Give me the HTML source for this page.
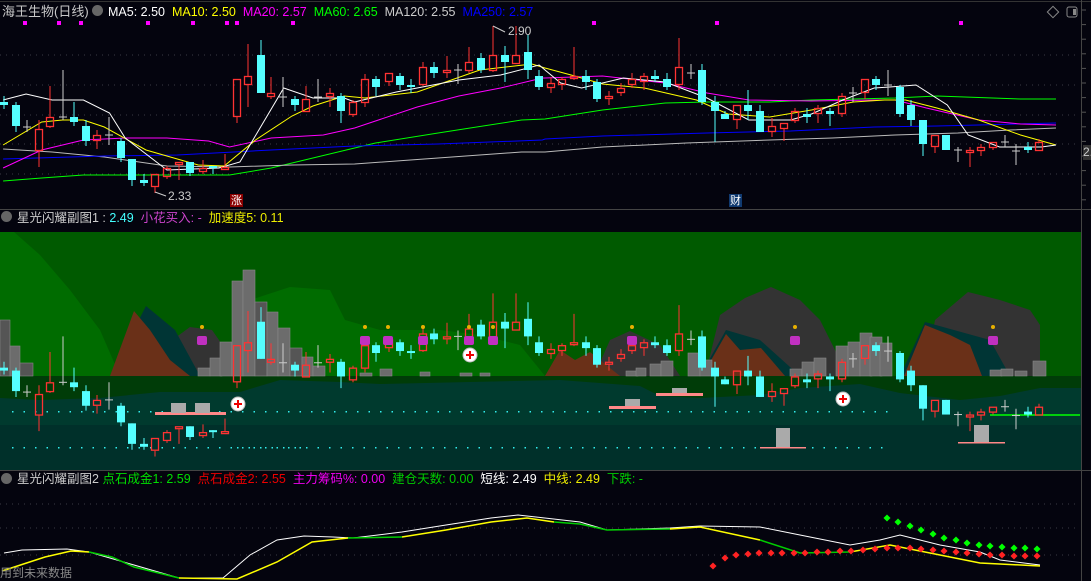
<!DOCTYPE html>
<html><head><meta charset="utf-8"><style>
html,body{margin:0;padding:0;background:#04040e;width:1091px;height:581px;overflow:hidden}
#c{position:absolute;left:0;top:0}
.t{position:absolute;font-family:"Liberation Sans","Noto Sans CJK SC",sans-serif;font-size:12px;white-space:nowrap;line-height:14px}
</style></head><body>
<svg id="c" width="1091" height="581" xmlns="http://www.w3.org/2000/svg">
<rect width="1091" height="581" fill="#04040e"/>
<g id="g"></g>
</svg>
<div class="t" style="left:2px;top:5px;color:#c8c8c8;font-size:13px">海王生物(日线)</div>
<div class="t" style="left:92px;top:5px;width:11px;height:11px;border-radius:6px;background:#666"></div>
<div class="t" style="left:108px;top:5px;font-size:12.5px"><span style="color:#fff">MA5: 2.50</span>&nbsp; <span style="color:#ff0">MA10: 2.50</span>&nbsp; <span style="color:#f0f">MA20: 2.57</span>&nbsp; <span style="color:#0f0">MA60: 2.65</span>&nbsp; <span style="color:#ccc">MA120: 2.55</span>&nbsp; <span style="color:#00f">MA250: 2.57</span></div>
<div class="t" style="left:508px;top:24px;color:#ccc">2.90</div>
<div class="t" style="left:168px;top:189px;color:#ccc">2.33</div>
<div class="t" style="left:230px;top:194px;width:13px;height:13px;background:#8b0000;color:#fff;font-size:11px;text-align:center">涨</div>
<div class="t" style="left:729px;top:194px;width:13px;height:13px;background:#103a70;color:#fff;font-size:11px;text-align:center">财</div>
<div class="t" style="left:1083px;top:145px;width:8px;height:15px;background:#333;color:#ccc">2.</div>
<div class="t" style="left:1px;top:211px;width:11px;height:11px;border-radius:6px;background:#666"></div>
<div class="t" style="left:17px;top:211px;font-size:12.5px"><span style="color:#ccc">星光闪耀副图1 : </span><span style="color:#4ff">2.49</span>&nbsp; <span style="color:#c4c">小花买入: -</span>&nbsp; <span style="color:#ee0">加速度5: 0.11</span></div>
<div class="t" style="left:1px;top:473px;width:11px;height:11px;border-radius:6px;background:#666"></div>
<div class="t" style="left:17px;top:472px;font-size:12.5px"><span style="color:#ccc">星光闪耀副图2</span> <span style="color:#0d0">点石成金1: 2.59</span>&nbsp; <span style="color:#e00">点石成金2: 2.55</span>&nbsp; <span style="color:#e0e">主力筹码%: 0.00</span>&nbsp; <span style="color:#0c0">建仓天数: 0.00</span>&nbsp; <span style="color:#fff">短线: 2.49</span>&nbsp; <span style="color:#ee0">中线: 2.49</span>&nbsp; <span style="color:#0c0">下跌: -</span></div>
<div class="t" style="left:0px;top:566px;color:#888">用到未来数据</div>
<script>
var S='';
function R(x,y,w,h,f,e){S+='<rect x="'+x+'" y="'+y+'" width="'+w+'" height="'+h+'" fill="'+f+'" '+(e||'')+'/>';}
function L(x1,y1,x2,y2,c,e){S+='<line x1="'+x1+'" y1="'+y1+'" x2="'+x2+'" y2="'+y2+'" stroke="'+c+'" '+(e||'')+'/>';}
function P(pts,f){S+='<polygon points="'+pts+'" fill="'+f+'"/>';}
function PL(pts,c,w){S+='<polyline points="'+pts+'" fill="none" stroke="'+c+'" stroke-width="'+(w||1)+'"/>';}
// borders
L(0,1.5,1091,1.5,'#333');L(0,209.5,1091,209.5,'#444');L(0,470.5,1091,470.5,'#444');L(1081.5,0,1081.5,581,'#444');
for(var y=10;y<205;y+=14.6)L(1082,y,1086,y,'#555');
// main grid
[55,85,115,144,174].forEach(function(y){L(0,y,1080,y,'#3a3a44','stroke-dasharray="1 5"');});
[25,59,81,148,193,227,237,293,594,717,961].forEach(function(x){R(x-2,21,4,4,'#f0f');});
// sub1 background
R(0,232,1081,238,'#003a2e');R(0,425,1081,45,'#00302a');
R(0,232,1081,144,'#005a00');
P('0,232 14,232 40,255 70,290 100,330 120,376 0,376','#006c00');
P('230,376 250,300 290,287 330,290 345,320 380,330 440,330 480,335 520,345 545,376','#006c00');
// dark green band
P('0,376 1081,376 1081,388 1040,388 1000,396 960,400 900,393 860,384 800,388 760,395 700,398 660,396 640,386 560,380 380,384 340,382 280,380 240,392 160,392 100,398 40,400 0,398','#003c08');
// dark mountains
P('167,376 175,338 190,327 212,330 226,350 240,376','#333');
P('594,376 610,340 630,331 660,345 680,376','#333');
P('705,376 720,315 745,298 771,287 800,300 820,320 848,376','#333');
P('925,376 935,320 968,292 1000,300 1030,310 1040,325 1040,376','#333');
// teal ridges
P('110,376 146,306 175,330 200,376','#003535');P('700,376 726,330 760,340 800,376','#003535');P('900,376 925,322 990,340 1010,376','#003535');
// brown
P('110,376 134,311 150,330 170,360 190,376','#6a3018');
P('545,376 560,350 575,360 590,352 620,376','#6a3018');
P('702,376 726,334 740,350 761,348 785,376','#6a3018');
P('904,376 925,325 950,335 970,345 982,376','#6a3018');
// buildings
function B(x,w,t,c){R(x,t,w,376-t,c||'#6c6c6c','stroke="#888" stroke-width="0.6"');}
B(0,10,320,'#555');B(10,10,346);B(20,13,363,'#555');B(198,12,368);B(210,12,358);B(220,12,342);B(232,11,281);B(243,12,270);B(255,12,302,'#555');B(267,11,312);B(278,12,328);B(290,12,348,'#555');B(302,11,357);B(313,12,366);
B(360,12,373);B(380,12,369);B(420,10,372);B(460,12,373);B(480,10,373);
B(626,12,371);B(636,10,368);B(650,11,364);B(661,12,361);B(688,12,353);B(700,12,360);B(790,12,369);B(802,12,362);B(814,12,358);B(836,12,346);B(848,12,342);B(860,12,333);B(870,12,337);B(880,12,343);B(990,12,370);B(1001,12,369);B(1015,12,371);B(1033,13,361);
// cyan dotted lines
for(var x=12;x<890;x+=11.5){R(x,411,1.5,1.5,'#3ee');}
for(var x=12;x<300;x+=11.5){R(x,447,1.5,1.5,'#3ee');}
for(var x=237;x<890;x+=11.5){R(x,447,1.5,1.5,'#3ee');}
// salmon bars
R(155,412,71,3,'#f88');R(171,403,15,10,'#aaa');R(195,403,15,10,'#aaa');
R(609,406,47,3,'#f88');R(625,399,15,7,'#aaa');
R(656,393,47,3,'#f88');R(672,388,15,5,'#aaa');
R(760,447,46,1.5,'#f88');R(776,428,14,19,'#aaa');
R(958,442,47,1.5,'#f88');R(974,425,15,17,'#aaa');
L(990,415,1080,415,'#0f0','stroke-width="1.5"');
// candles
var C=[[4,'c',102,105,96,109],[16,'c',105,126,102,132],[27,'x',127,127,120,132],[39,'r',129,151,120,167],[50,'r',117,127,86,128],[63,'x',117,117,70,120],[74,'c',117,122,102,126],[86,'c',126,141,120,146],[97,'r',135,141,130,149],[109,'x',135,135,117,145],[121,'c',141,158,138,162],[132,'c',159,180,159,186],[144,'c',180,183,174,186],[155,'r',174,187,174,193],[167,'r',168,177,166,179],[179,'r',162,165,162,180],[190,'c',162,173,162,176],[203,'r',168,172,160,174],[213,'c',166,168,166,174],[225,'r',167,170,154,170],[237,'r',79,117,79,123],[248,'r',76,85,44,107],[261,'c',55,93,40,93],[271,'r',93,97,77,99],[283,'x',97,97,77,107],[295,'c',99,105,96,111],[306,'r',99,112,86,112],[318,'x',97,97,79,102],[330,'r',93,97,88,107],[341,'c',96,111,93,123],[353,'r',102,115,100,117],[365,'r',79,103,74,107],[376,'c',79,87,76,96],[389,'r',73,82,73,86],[400,'c',76,85,73,90],[411,'c',85,87,79,93],[423,'r',67,85,62,86],[434,'c',67,73,62,78],[447,'r',70,73,56,78],[458,'x',70,70,64,84],[469,'r',62,71,47,73],[481,'c',58,70,53,73],[493,'r',55,71,26,72],[505,'c',55,62,46,82],[516,'r',55,64,26,64],[528,'c',52,70,35,79],[539,'c',76,87,70,90],
[551,'r',83,88,77,93],[562,'r',79,85,77,90],[574,'r',76,79,47,80],[586,'c',76,82,70,90],[597,'c',82,99,79,102],[609,'r',96,99,91,105],[621,'r',88,93,83,96],[632,'r',79,85,73,88],[644,'r',76,82,73,90],[655,'c',76,79,70,82],[667,'c',79,87,73,90],[679,'r',67,85,38,90],[691,'x',73,73,64,79],[702,'c',70,102,64,105],[715,'c',102,111,96,142],[725,'c',114,119,111,119],[737,'r',105,120,105,129],[748,'c',105,111,90,120],[760,'c',111,132,105,132],[772,'r',126,132,118,137],[784,'r',123,129,123,141],[795,'r',111,121,108,123],[807,'c',114,117,108,123],[818,'r',108,114,105,123],[830,'c',111,114,108,126],[842,'r',96,114,93,117],[853,'x',93,93,87,102],[865,'r',79,93,79,99],[876,'c',79,85,76,90],[888,'x',85,85,70,96],[900,'c',87,114,85,117],[911,'c',105,120,100,126],[923,'c',120,144,120,156],[935,'r',135,147,135,153],[946,'c',135,150,135,150],[958,'x',150,150,147,162],[970,'r',150,153,147,167],[981,'r',147,151,144,156],[993,'r',142,148,142,150],[1005,'x',142,142,135,147],[1016,'x',151,151,144,165],[1028,'c',147,150,142,153],[1039,'r',142,151,139,151]];
function cand(k,off){
 C.forEach(function(c){var x=c[0],t=c[1],a=c[2]*k+off,b=c[3]*k+off,h=c[4]*k+off,l=c[5]*k+off;
  if(t=='c'){L(x,h,x,l,'#5ff');R(x-4,a,8,Math.max(b-a,2),'#5ff');}
  else if(t=='x'){L(x,h,x,l,'#ccc');L(x-4,a,x+4,a,'#ccc');}
  else{L(x,h,x,a,'#f33');L(x,b,x,l,'#f33');R(x-3.5,a+0.5,7,Math.max(b-a-1,1),'none','stroke="#f33" stroke-width="1.3"');}
 });}
// sub1 candles
cand(0.977,268);
// flowers
[202,365,388,423,469,493,632,795,993].forEach(function(x){R(x-2,325,4,4,'#e8b000','rx="2"');R(x-5,336,10,9,'#c030c0','rx="2"');});
[[238,404],[470,355],[843,399]].forEach(function(p){S+='<circle cx="'+p[0]+'" cy="'+p[1]+'" r="7" fill="#fff" stroke="#bbb"/>';L(p[0]-4,p[1],p[0]+4,p[1],'#e00','stroke-width="2"');L(p[0],p[1]-4,p[0],p[1]+4,'#e00','stroke-width="2"');});
// MA lines main
function tx(a){return a.map(function(p){var x=p[0]<545?p[0]*1.043:545+(p[0]-545)*1.045;return x.toFixed(1)+','+p[1];}).join(' ');}
PL(tx([[3,181],[40,178],[80,175],[220,175],[260,168],[300,158],[360,143],[420,133],[500,120],[545,119],[600,110],[660,103],[700,102],[760,102],[800,100],[880,98],[920,96],[1000,99],[1034,99]]),'#0f0');
PL(tx([[3,149],[50,152],[100,157],[160,166],[220,167],[280,165],[340,164],[420,158],[500,152],[545,152],[600,147],[680,143],[760,140],[820,138],[880,135],[940,133],[990,130],[1034,128]]),'#bbb');
PL(tx([[3,159],[100,156],[170,155],[260,150],[340,146],[420,144],[520,140],[545,139],[600,136],[700,133],[780,131],[860,127],[920,126],[960,125],[1034,123]]),'#00f');
PL(tx([[3,168],[40,150],[80,140],[120,138],[160,138],[200,141],[220,147],[260,138],[310,135],[340,128],[400,107],[440,96],[480,88],[520,78],[545,78],[600,76],[660,83],[700,93],[740,100],[800,101],[860,100],[880,100],[910,108],[960,120],[1000,124],[1034,125]]),'#f0f');
PL(tx([[3,145],[40,122],[60,120],[80,120],[100,127],[140,150],[190,165],[215,166],[245,140],[280,116],[300,106],[330,96],[350,98],[400,92],[460,70],[510,64],[545,68],[570,75],[600,84],[640,88],[690,100],[720,114],[760,117],[800,110],[840,102],[870,100],[890,100],[920,108],[960,120],[1000,135],[1034,145]]),'#ff0');
PL(tx([[3,100],[25,94],[50,100],[80,100],[105,113],[120,138],[160,170],[210,168],[230,162],[272,88],[300,98],[330,98],[340,102],[380,92],[440,80],[480,75],[517,65],[545,70],[560,83],[580,88],[620,78],[660,82],[700,98],[740,120],[780,120],[800,114],[830,100],[860,88],[875,87],[900,85],[930,105],[950,135],[980,147],[1020,147],[1034,145]]),'#fff');
cand(1,0);
L(493,26,505,32,'#ccc');L(155,192,166,196,'#ccc');
// sub2
[504,528,555].forEach(function(y){L(0,y,1080,y,'#3a3a44','stroke-dasharray="1 5"');});
PL('4,553 22,550 67,549 89,552 134,565 179,578 223,578 250,555 277,540 304,536 333,537 353,538 402,532 446,525 491,518 518,515 536,517 580,522 607,530 670,528 700,526 760,527 800,535 850,545 880,540 900,535 940,545 980,552 1000,560 1040,565','#fff');
PL('2,571 45,557 71,551 89,552','#ff0',1.5);PL('89,552 112,557 134,567 179,578','#0c0',1.5);PL('179,578 237,579 277,562 312,542 348,538','#ff0',1.5);PL('348,538 402,537','#0c0',1.5);PL('402,537 446,530 491,522 527,518 554,522','#ff0',1.5);PL('554,522 580,524 607,530 670,529','#0c0',1.5);PL('670,529 700,527 760,540','#ff0',1.5);PL('760,540 800,553 850,552','#0c0',1.5);PL('850,552 890,545 940,555 980,563 1040,566','#ff0',1.5);
[[887,518],[898,522],[910,526],[921,530],[933,534],[944,538],[956,540],[967,543],[979,545],[990,546],[1002,547],[1014,548],[1025,548],[1037,549]].forEach(function(p){R(p[0]-2.5,p[1]-2.5,5,5,'#0f0','transform="rotate(45 '+p[0]+' '+p[1]+')"');});
[[713,566],[725,558],[736,555],[748,554],[759,553],[771,553],[782,553],[794,553],[805,553],[817,552],[828,552],[840,551],[851,551],[863,550],[875,549],[887,548],[898,548],[910,548],[921,549],[933,550],[944,551],[956,552],[967,553],[979,554],[990,555],[1002,555],[1014,556],[1025,556],[1037,556]].forEach(function(p){R(p[0]-2.5,p[1]-2.5,5,5,'#f22','transform="rotate(45 '+p[0]+' '+p[1]+')"');});
// top-right icons
R(1049,8,8,8,'none','stroke="#888" transform="rotate(45 1053 12)"');R(1067,7,10,10,'none','stroke="#888" rx="2"');R(1073,9,3,6,'#888');
document.getElementById('g').innerHTML=S;
</script>
</body></html>
